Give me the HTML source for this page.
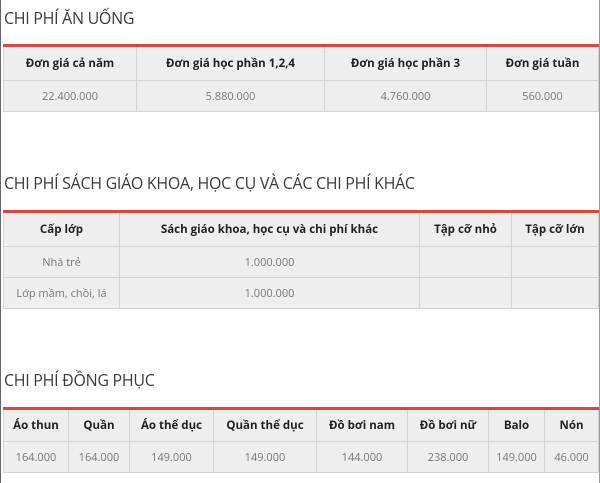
<!DOCTYPE html>
<html><head><meta charset="utf-8"><style>
*{margin:0;padding:0;box-sizing:border-box}
body{width:600px;height:483px;background:#fff;font-family:"Open Sans","Liberation Sans","DejaVu Sans",sans-serif;position:relative;overflow:hidden;border-left:1px solid #666;border-right:1px solid #999}
h2{position:absolute;left:3px;font-weight:normal;font-size:16px;color:#3a3a3a;letter-spacing:-0.3px}
table{position:absolute;left:2px;width:595px;border-collapse:collapse;table-layout:fixed;background:#eee;border-top:3px solid #e0453b}
td,th{border:1px solid #d4d4d4;text-align:center;font-size:11px;color:#777}
th{font-weight:bold;color:#222;font-size:11.5px}
</style></head><body>
<h2 style="top:7px">CHI PHÍ ĂN UỐNG</h2>
<table style="top:44px">
<colgroup><col style="width:133px"><col style="width:188px"><col style="width:162px"><col style="width:112px"></colgroup>
<tr style="height:35px"><th>Đơn giá cả năm</th><th>Đơn giá học phần 1,2,4</th><th>Đơn giá học phần 3</th><th>Đơn giá tuần</th></tr>
<tr style="height:31px"><td>22.400.000</td><td>5.880.000</td><td>4.760.000</td><td>560.000</td></tr>
</table>
<h2 style="top:172px">CHI PHÍ SÁCH GIÁO KHOA, HỌC CỤ VÀ CÁC CHI PHÍ KHÁC</h2>
<table style="top:210px">
<colgroup><col style="width:116px"><col style="width:300px"><col style="width:92px"><col style="width:87px"></colgroup>
<tr style="height:35px"><th>Cấp lớp</th><th>Sách giáo khoa, học cụ và chi phí khác</th><th>Tập cỡ nhỏ</th><th>Tập cỡ lớn</th></tr>
<tr style="height:31px"><td>Nhà trẻ</td><td>1.000.000</td><td></td><td></td></tr>
<tr style="height:31px"><td>Lớp mầm, chồi, lá</td><td>1.000.000</td><td></td><td></td></tr>
</table>
<h2 style="top:369px">CHI PHÍ ĐỒNG PHỤC</h2>
<table style="top:407px">
<colgroup><col style="width:65px"><col style="width:61px"><col style="width:84px"><col style="width:103px"><col style="width:91px"><col style="width:81px"><col style="width:56px"><col style="width:54px"></colgroup>
<tr style="height:33px"><th>Áo thun</th><th>Quần</th><th>Áo thể dục</th><th>Quần thể dục</th><th>Đồ bơi nam</th><th>Đồ bơi nữ</th><th>Balo</th><th>Nón</th></tr>
<tr style="height:31px"><td>164.000</td><td>164.000</td><td>149.000</td><td>149.000</td><td>144.000</td><td>238.000</td><td>149.000</td><td>46.000</td></tr>
</table>
</body></html>
